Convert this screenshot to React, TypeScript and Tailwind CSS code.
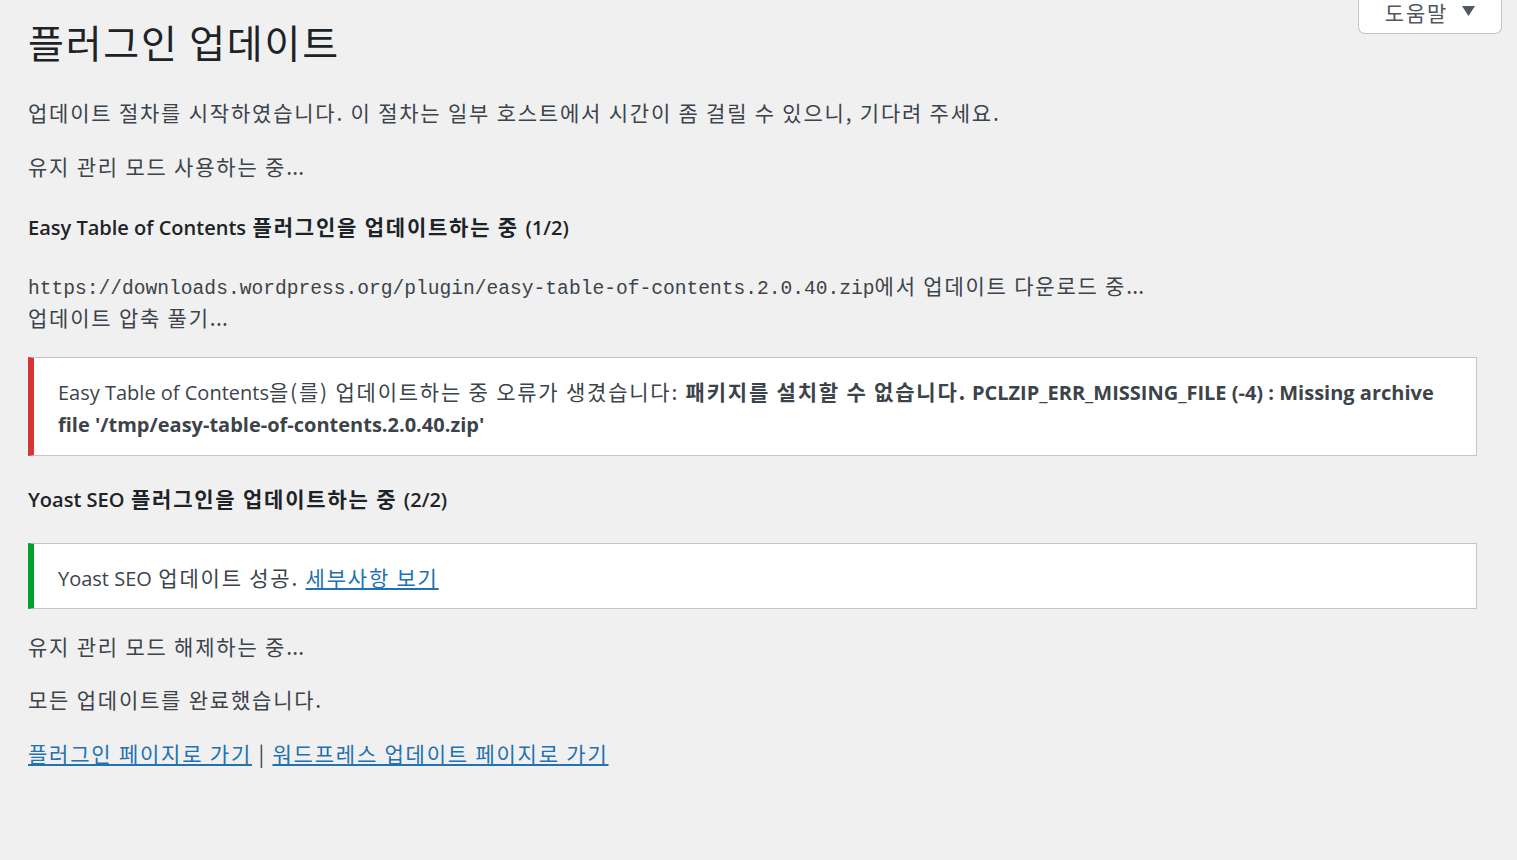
import { ReactNode } from 'react'

const KR = "font-['Noto_Sans_CJK_KR',sans-serif]"

// Latin runs use a narrower humanist face, Korean runs keep the CJK font with extra tracking
function L({ children, weight = 'normal' }: { children: ReactNode; weight?: 'normal' | 'semi' | 'bold' }) {
  const w = weight === 'bold' ? 'font-bold' : weight === 'semi' ? 'font-semibold' : 'font-normal'
  return (
    <span className={`font-['Open_Sans',sans-serif] text-[20px] leading-none tracking-normal ${w}`}>
      {children}
    </span>
  )
}

const Dots = () => <span className="tracking-[0.01em]">...</span>

function Notice({ tone, children }: { tone: 'error' | 'success'; children: ReactNode }) {
  const edge = tone === 'error' ? 'border-l-[#d63638]' : 'border-l-[#00a32a]'
  return (
    <div className={`mr-[40px] bg-white border border-[#c3c4c7] border-l-[6px] ${edge} px-[24px]`}>
      {children}
    </div>
  )
}

export default function App() {
  return (
    <div className={`min-h-[860px] bg-[#f0f0f1] pl-[28px] pb-10 text-[#3c434a] ${KR} text-[21px] leading-[32px] tracking-[0.085em]`}>
      {/* Header */}
      <div className="flex items-start justify-between">
        <h1 className="mt-[15px] text-[#1d2327] text-[39px] leading-[52px] font-normal">플러그인 업데이트</h1>
        <button className="mr-[15px] mt-[-16px] h-[50px] w-[144px] flex items-end justify-center gap-[14px] pb-[9px] bg-white border border-t-0 border-[#c3c4c7] rounded-b-[7px] text-[#50575e] text-[21px] leading-[24px]">
          <span>도움말</span>
          <svg width="13" height="10" viewBox="0 0 13 10" className="mb-[8px]">
            <path d="M0 0 H13 L6.5 10 Z" fill="#50575e" />
          </svg>
        </button>
      </div>

      <p className="mt-[29px]">업데이트 절차를 시작하였습니다. 이 절차는 일부 호스트에서 시간이 좀 걸릴 수 있으니, 기다려 주세요.</p>
      <p className="mt-[22px]">유지 관리 모드 사용하는 중<Dots /></p>

      <h2 className="mt-[28px] text-[#1d2327] font-semibold">
        <L weight="semi">Easy Table of Contents</L> 플러그인을 업데이트하는 중 <L weight="semi">(1/2)</L>
      </h2>

      <div className="mt-[27px]">
        <p className="h-[32px] whitespace-nowrap">
          <code className="font-['Liberation_Mono',monospace] text-[19.6px] leading-none tracking-normal">https://downloads.wordpress.org/plugin/easy-table-of-contents.2.0.40.zip</code>
          에서 업데이트 다운로드 중<Dots />
        </p>
        <p>업데이트 압축 풀기<Dots /></p>
      </div>

      <div className="mt-[24px]">
        <Notice tone="error">
          <div className="pt-[17px] pb-[16px]">
            <p className="whitespace-nowrap">
              <L>Easy Table of Contents</L>을(를) 업데이트하는 중 오류가 생겼습니다:{' '}
              <strong className="font-semibold">
                패키지를 설치할 수 없습니다.<span className="tracking-normal"> </span>
                <L weight="bold">PCLZIP_ERR_MISSING_FILE (-4) : Missing archive</L>
              </strong>
            </p>
            <p className="whitespace-nowrap">
              <L weight="bold">file '/tmp/easy-table-of-contents.2.0.40.zip'</L>
            </p>
          </div>
        </Notice>
      </div>

      <h2 className="mt-[26px] text-[#1d2327] font-semibold">
        <L weight="semi">Yoast SEO</L> 플러그인을 업데이트하는 중 <L weight="semi">(2/2)</L>
      </h2>

      <div className="mt-[29px]">
        <Notice tone="success">
          <p className="pt-[17px] pb-[15px]">
            <L>Yoast SEO</L> 업데이트 성공.{' '}
            <a href="#" className="text-[#2271b1] underline">세부사항 보기</a>
          </p>
        </Notice>
      </div>

      <p className="mt-[21px]">유지 관리 모드 해제하는 중<Dots /></p>
      <p className="mt-[21px]">모든 업데이트를 완료했습니다.</p>
      <p className="mt-[22px]">
        <a href="#" className="text-[#2271b1] underline">플러그인 페이지로 가기</a>
        {' | '}
        <a href="#" className="text-[#2271b1] underline">워드프레스 업데이트 페이지로 가기</a>
      </p>
    </div>
  )
}
